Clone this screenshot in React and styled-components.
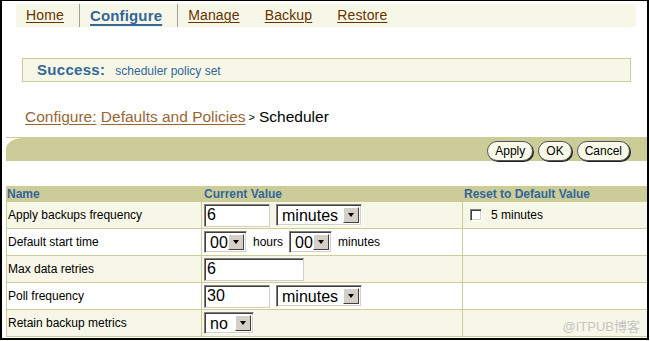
import React from "react";
import styled, { createGlobalStyle } from "styled-components";

const GlobalStyle = createGlobalStyle`
  html, body {
    margin: 0;
    padding: 0;
    background: #fff;
  }
  body {
    font-family: "Liberation Sans", Arial, sans-serif;
  }
`;

const OLIVE = "#cccc99";
const CREAM = "#f7f7e7";
const BLUE = "#336699";

const Frame = styled.div`
  position: relative;
  width: 649px;
  height: 340px;
  box-sizing: border-box;
  border-style: solid;
  border-color: #000;
  border-width: 1px 2px 2px 2px;
  padding-left: 4px;
  overflow: hidden;
  display: flex;
  flex-direction: column;
`;

const TabBar = styled.div`
  margin: 3px 0 0 10px;
  width: 620px;
  height: 23px;
  background: ${CREAM};
  display: flex;
`;

const Tab = styled.a`
  display: block;
  padding: 0 15px 0 10px;
  line-height: 23px;
  font-size: ${({ $active }) => ($active ? "15px" : "14px")};
  font-weight: ${({ $active }) => ($active ? "bold" : "normal")};
  letter-spacing: 0.15px;
  color: ${({ $active }) => ($active ? BLUE : "#663300")};
  text-decoration: underline;
  text-decoration-thickness: ${({ $active }) => ($active ? "2px" : "1px")};
  text-underline-offset: ${({ $active }) => ($active ? "3px" : "2px")};
  border-left: ${({ $active }) => ($active ? "1px solid #a0a0a0" : "none")};
  border-right: ${({ $active }) => ($active ? "1px solid #a0a0a0" : "none")};
  cursor: pointer;
`;

const SuccessBox = styled.div`
  margin: 31px 0 0 16px;
  width: 609px;
  height: 24px;
  box-sizing: border-box;
  border: 1px solid ${OLIVE};
  background: ${CREAM};
  padding-left: 14px;
  line-height: 22px;
  color: ${BLUE};
  font-size: 12px;
`;

const SuccessLabel = styled.span`
  font-size: 15px;
  font-weight: bold;
  letter-spacing: 0.3px;
  margin-right: 10px;
`;

const Breadcrumb = styled.div`
  margin-top: 25px;
  padding-left: 19px;
  height: 20px;
  line-height: 20px;
  font-size: 15.5px;
  color: #000;
`;

const CrumbLink = styled.a`
  color: #996633;
  text-decoration: underline;
  text-underline-offset: 2px;
`;

const CrumbSep = styled.span`
  font-size: 11px;
  margin: 0 4px 0 3px;
  vertical-align: 1px;
`;

const BandWrap = styled.div`
  margin-top: 10px;
  border-top: 1px solid ${OLIVE};
`;

const Band = styled.div`
  height: 23px;
  background: ${OLIVE};
  border-top-left-radius: 17px 11px;
  display: flex;
  justify-content: flex-end;
  align-items: center;
  gap: 5px;
  padding: 2px 17px 0 0;
  box-sizing: border-box;
`;

const Button = styled.button`
  height: 20px;
  box-sizing: border-box;
  padding: 0 7px;
  font-family: "Liberation Sans", Arial, sans-serif;
  font-size: 12px;
  color: #000;
  background: #fafaea;
  border: 1px solid #555;
  border-radius: 10px;
  box-shadow: 1px 1px 0 #222;
  cursor: pointer;
`;

const Table = styled.div`
  margin-top: 25px;
  font-size: 12px;
`;

const Row = styled.div`
  display: grid;
  grid-template-columns: 195px 261px 1fr;
  height: ${({ $head }) => ($head ? "16px" : "27px")};
  box-sizing: border-box;
  background: ${({ $head, $alt }) => ($head ? OLIVE : $alt ? CREAM : "#fff")};
  border-bottom: ${({ $head }) => ($head ? "none" : `1px solid ${OLIVE}`)};
`;

const HeadCell = styled.div`
  font-weight: bold;
  color: ${BLUE};
  line-height: 16px;
  padding-left: ${({ $pad }) => $pad || 1}px;
  white-space: nowrap;
`;

const Cell = styled.div`
  display: flex;
  align-items: center;
  gap: 6px;
  padding-left: ${({ $pad }) => $pad || 1}px;
  border-left: 1px solid ${OLIVE};
  color: #000;
  white-space: nowrap;
`;

const TextInput = styled.input`
  width: ${({ $w }) => $w}px;
  height: 23px;
  box-sizing: border-box;
  margin: 0;
  padding: 0 2px;
  font-family: "Liberation Sans", Arial, sans-serif;
  font-size: 16px;
  color: #000;
  background: #fff;
  border: 1px solid;
  border-color: #808080 #d4d0c8 #d4d0c8 #808080;
  box-shadow: inset 1px 1px 0 #404040;
  outline: none;
`;

const SelectBox = styled.div`
  width: ${({ $w }) => $w}px;
  height: 22px;
  box-sizing: border-box;
  display: flex;
  align-items: stretch;
  padding: 2px;
  background: #fff;
  border: 1px solid;
  border-color: #808080 #fff #fff #808080;
  box-shadow: inset 1px 1px 0 #404040, inset -1px -1px 0 #d4d0c8;
  font-size: 16px;
`;

const SelectValue = styled.span`
  flex: 1;
  padding-left: 3px;
  line-height: 17px;
`;

const SelectArrow = styled.span`
  width: 16px;
  box-sizing: border-box;
  background: #d4d0c8;
  border: 1px solid;
  border-color: #fff #404040 #404040 #fff;
  display: flex;
  align-items: center;
  justify-content: center;

  &::after {
    content: "";
    border-left: 3.5px solid transparent;
    border-right: 3.5px solid transparent;
    border-top: 4px solid #000;
  }
`;

const Checkbox = styled.span`
  width: 12px;
  height: 12px;
  box-sizing: border-box;
  margin: 0 3px 0 6px;
  background: #fff;
  border: 1px solid;
  border-color: #808080 #fff #fff #808080;
  box-shadow: inset 1px 1px 0 #404040, inset -1px -1px 0 #d4d0c8;
`;

const Watermark = styled.div`
  position: absolute;
  right: 7px;
  bottom: 3px;
  font-family: "Liberation Sans", "Noto Sans CJK SC", sans-serif;
  font-size: 13px;
  color: #c4c4c4;
`;

const Select = ({ value, width }) => (
  <SelectBox $w={width}>
    <SelectValue>{value}</SelectValue>
    <SelectArrow />
  </SelectBox>
);

const tabs = ["Home", "Configure", "Manage", "Backup", "Restore"];

export default function App() {
  return (
    <>
      <GlobalStyle />
      <Frame>
        <TabBar>
          {tabs.map((t) => (
            <Tab key={t} $active={t === "Configure"}>
              {t}
            </Tab>
          ))}
        </TabBar>

        <SuccessBox>
          <SuccessLabel>Success:</SuccessLabel>
          scheduler policy set
        </SuccessBox>

        <Breadcrumb>
          <CrumbLink>Configure:</CrumbLink> <CrumbLink>Defaults and Policies</CrumbLink>
          <CrumbSep>&gt;</CrumbSep>
          Scheduler
        </Breadcrumb>

        <BandWrap>
          <Band>
            <Button>Apply</Button>
            <Button>OK</Button>
            <Button>Cancel</Button>
          </Band>
        </BandWrap>

        <Table>
          <Row $head>
            <HeadCell>Name</HeadCell>
            <HeadCell $pad={3}>Current Value</HeadCell>
            <HeadCell $pad={2}>Reset to Default Value</HeadCell>
          </Row>
          <Row $alt>
            <Cell>Apply backups frequency</Cell>
            <Cell $pad={2}>
              <TextInput $w={66} defaultValue="6" readOnly />
              <Select value="minutes" width={86} />
            </Cell>
            <Cell>
              <Checkbox />5 minutes
            </Cell>
          </Row>
          <Row>
            <Cell>Default start time</Cell>
            <Cell $pad={2}>
              <Select value="00" width={43} />
              hours
              <Select value="00" width={43} />
              minutes
            </Cell>
            <Cell />
          </Row>
          <Row $alt>
            <Cell>Max data retries</Cell>
            <Cell $pad={2}>
              <TextInput $w={100} defaultValue="6" readOnly />
            </Cell>
            <Cell />
          </Row>
          <Row>
            <Cell>Poll frequency</Cell>
            <Cell $pad={2}>
              <TextInput $w={66} defaultValue="30" readOnly />
              <Select value="minutes" width={86} />
            </Cell>
            <Cell />
          </Row>
          <Row $alt>
            <Cell>Retain backup metrics</Cell>
            <Cell $pad={2}>
              <Select value="no" width={50} />
            </Cell>
            <Cell />
          </Row>
        </Table>

        <Watermark>@ITPUB博客</Watermark>
      </Frame>
    </>
  );
}
